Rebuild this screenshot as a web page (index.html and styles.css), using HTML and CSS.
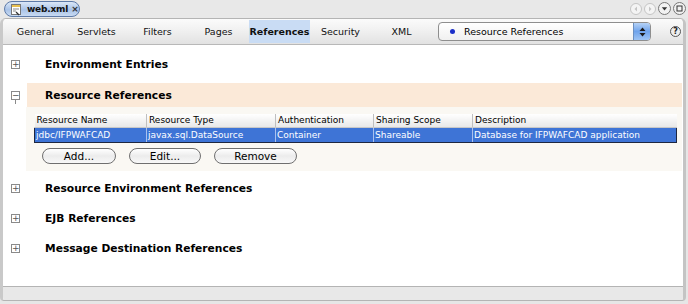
FILE: index.html
```html
<!DOCTYPE html>
<html>
<head>
<meta charset="utf-8">
<link rel="stylesheet" href="styles.css">
</head>
<body>
<div class="window">
  <div class="topbar">
    <div class="doc-tab">
      <svg class="doc-icon" width="12" height="13" viewBox="0 0 12 13">
        <rect x="1.5" y="1.5" width="9" height="10" fill="#fff" stroke="#777"/>
        <rect x="2" y="2" width="8" height="2" fill="#e8c050"/>
        <path d="M3 6h6M3 8h3" stroke="#888"/>
        <path d="M6 9l3 3" stroke="#333" stroke-width="1.2"/>
      </svg>
      <span class="doc-name">web.xml</span>
      <span class="doc-close">×</span>
    </div>
    <div class="win-ctrls">
      <span class="wc"><svg width="12" height="12" viewBox="0 0 12 12"><circle cx="6" cy="6" r="5.5" fill="#f4f4f4" stroke="#c4c4c4"/><path d="M7 3.5L4.5 6 7 8.5z" fill="#c4c4c4"/></svg></span>
      <span class="wc"><svg width="12" height="12" viewBox="0 0 12 12"><circle cx="6" cy="6" r="5.5" fill="#f4f4f4" stroke="#c4c4c4"/><path d="M5 3.5L7.5 6 5 8.5z" fill="#c4c4c4"/></svg></span>
      <span class="wc"><svg width="13" height="13" viewBox="0 0 13 13"><circle cx="6.5" cy="6.5" r="6" fill="#f2f2f2" stroke="#777"/><path d="M3.8 5.2h5.4L6.5 8.4z" fill="#333"/></svg></span>
      <span class="wc"><svg width="13" height="13" viewBox="0 0 13 13"><circle cx="6.5" cy="6.5" r="6" fill="#f2f2f2" stroke="#777"/><rect x="4" y="4" width="5" height="5" fill="none" stroke="#333"/></svg></span>
    </div>
  </div>

  <div class="panel">
    <div class="toolbar">
      <nav class="tabs">
        <span class="tab">General</span>
        <span class="tab">Servlets</span>
        <span class="tab">Filters</span>
        <span class="tab">Pages</span>
        <span class="tab active">References</span>
        <span class="tab">Security</span>
        <span class="tab">XML</span>
      </nav>
      <div class="combo">
        <span class="combo-dot"></span>
        <span class="combo-text">Resource References</span>
        <span class="combo-btn">
          <svg width="7" height="10" viewBox="0 0 7 10"><path d="M3.5 0.5L6.5 4H0.5z M0.5 6h6L3.5 9.5z" fill="#1a1a1a"/></svg>
        </span>
      </div>
      <span class="help">?</span>
    </div>

    <div class="content">
      <div class="section first">
        <span class="toggle">+</span>
        <span class="sec-title">Environment Entries</span>
      </div>

      <div class="section open">
        <span class="toggle minus">−</span>
        <span class="sec-title">Resource References</span>
      </div>
      <div class="sec-body">
        <table class="grid">
          <thead>
            <tr>
              <th class="c1">Resource Name</th>
              <th class="c2">Resource Type</th>
              <th class="c3">Authentication</th>
              <th class="c4">Sharing Scope</th>
              <th class="c5">Description</th>
            </tr>
          </thead>
          <tbody>
            <tr class="sel">
              <td>jdbc/IFPWAFCAD</td>
              <td>javax.sql.DataSource</td>
              <td>Container</td>
              <td>Shareable</td>
              <td>Database for IFPWAFCAD application</td>
            </tr>
          </tbody>
        </table>
        <div class="buttons">
          <button class="btn b-add">Add...</button>
          <button class="btn b-edit">Edit...</button>
          <button class="btn b-remove">Remove</button>
        </div>
      </div>

      <div class="section">
        <span class="toggle">+</span>
        <span class="sec-title">Resource Environment References</span>
      </div>
      <div class="section">
        <span class="toggle">+</span>
        <span class="sec-title">EJB References</span>
      </div>
      <div class="section">
        <span class="toggle">+</span>
        <span class="sec-title">Message Destination References</span>
      </div>
    </div>
    <div class="statusbar"></div>
  </div>
</div>
</body>
</html>
```
FILE: styles.css
```css
* { box-sizing: border-box; }
html, body { margin: 0; padding: 0; }
body {
  width: 688px;
  height: 304px;
  background: #e6e6e6;
  font-family: "DejaVu Sans", "Liberation Sans", sans-serif;
  color: #000;
  overflow: hidden;
}
.window { width: 688px; height: 304px; display: flex; flex-direction: column; }

.topbar {
  height: 18px;
  display: flex;
  align-items: flex-start;
  justify-content: space-between;
  padding: 1px 2px 0 4px;
  background: #e8e8e8;
}
.doc-tab {
  height: 16px;
  width: 76px;
  display: flex;
  align-items: center;
  padding: 0 3px 0 5px;
  border: 1px solid #5d7aa8;
  border-radius: 8px;
  background: linear-gradient(#dbe7f7, #a9c3e8 55%, #c8daf2);
}
.doc-icon { flex: none; }
.doc-name { font-weight: bold; font-size: 9px; margin-left: 5px; letter-spacing: -0.2px; color: #111; }
.doc-close { font-size: 9px; font-weight: bold; margin-left: 3px; color: #333; }

.win-ctrls { display: flex; gap: 2px; align-items: center; padding-top: 1px; }
.wc { display: flex; }

.panel {
  flex: 1;
  display: flex;
  flex-direction: column;
  margin: 0 2px 3px 0;
  border: 1px solid #b4b4b4;
  border-left: 3px solid #c9c9c9;
  border-right: 3px solid #c4c4c4;
  border-radius: 6px 6px 4px 4px;
  background: #fff;
  overflow: hidden;
}
.toolbar {
  height: 26px;
  display: flex;
  align-items: center;
  background: linear-gradient(#fbfbfb 0%, #f2f2f2 40%, #e2e2e2 100%);
  border-bottom: 1px solid #b8b8b8;
}
.tabs { display: flex; align-items: center; height: 100%; font-size: 9.5px; padding-left: 2px; }
.tab {
  width: 61px;
  height: 23px;
  display: flex;
  align-items: center;
  justify-content: center;
  color: #111;
  white-space: nowrap;
}
.tab.active {
  background: #c9dcf4;
  font-weight: bold;
}

.combo {
  margin-left: 6px;
  width: 213px;
  height: 19px;
  display: flex;
  align-items: center;
  border: 1px solid #8e8e8e;
  border-radius: 4px;
  background: linear-gradient(#ffffff, #f0f0f0);
  font-size: 9.5px;
  overflow: hidden;
}
.combo-dot {
  width: 5px; height: 5px; border-radius: 50%;
  background: #1b2fc9;
  margin-left: 11px;
}
.combo-text { margin-left: 9px; flex: 1; }
.combo-btn {
  width: 17px; height: 17px;
  display: flex; align-items: center; justify-content: center;
  background: linear-gradient(#b5d2f6, #6fa3eb 50%, #9ec4f4);
  border-left: 1px solid #6b8fc0;
}
.help {
  margin-left: 19px;
  width: 11px; height: 11px;
  border: 1px solid #555;
  border-radius: 50%;
  font-size: 8px;
  font-weight: bold;
  display: flex; align-items: center; justify-content: center;
  background: #eee;
  color: #222;
}

.content { flex: 1; padding: 7px 1px 0 0; }
.section {
  height: 24px;
  display: flex;
  align-items: center;
  margin-bottom: 6px;
}
.section.first { margin-bottom: 7px; }
.section.open { margin-bottom: 0; }
.toggle {
  width: 9px; height: 9px;
  border: 1px solid #8a8a8a;
  margin-left: 8px;
  font-size: 9px;
  line-height: 7px;
  text-align: center;
  color: #555;
  flex: none;
}
.toggle.minus { position: relative; }
.toggle.minus::after {
  content: "";
  position: absolute;
  left: 3px; top: 8px;
  width: 1px; height: 4px;
  background: #8a8a8a;
}
.sec-title {
  font-weight: bold;
  font-size: 10.7px;
  margin-left: 25px;
  height: 24px;
  display: flex;
  align-items: center;
  flex: 1;
}
.section.open .sec-title {
  margin-left: 7px;
  padding-left: 18px;
  background: #fbe9d8;
}
.sec-body {
  margin-left: 23px;
  background: #faf8f3;
  padding: 7px 5px 7px 8px;
  margin-bottom: 6px;
}
.grid {
  width: 643px;
  border-collapse: collapse;
  font-size: 9px;
  table-layout: fixed;
}
.grid th {
  font-weight: normal;
  text-align: left;
  height: 13px;
  padding: 0 2px;
  background: linear-gradient(#ffffff, #e8e8e8);
  border-left: 1px solid #bfbfbf;
  border-bottom: 1px solid #c8c8c8;
  white-space: nowrap;
}
.grid th:first-child { border-left: none; }
.grid .c1 { width: 112px; }
.grid .c2 { width: 129px; }
.grid .c3 { width: 98px; }
.grid .c4 { width: 99px; }
.grid tr.sel td {
  background: #3e74d6;
  color: #fff;
  height: 15px;
  padding: 0 1px;
  border-left: 1px solid #a9c1ee;
  border-top: 1px solid #1e2740;
  border-bottom: 1px solid #1e2740;
  white-space: nowrap;
}
.grid tr.sel td:first-child { border-left: 1px solid #1e2740; }
.grid tr.sel td:last-child { border-right: 1px solid #1e2740; }

.buttons { display: flex; gap: 13px; margin-top: 5px; padding-left: 8px; }
.btn {
  height: 16px;
  border: 1px solid #6f6f6f;
  border-radius: 8px;
  background: linear-gradient(#ffffff, #ececec 50%, #f8f8f8);
  font-family: inherit;
  font-size: 10.5px;
  padding: 0;
  color: #000;
}
.b-add { width: 74px; }
.b-edit { width: 72px; }
.b-remove { width: 83px; }

.statusbar {
  height: 14px;
  background: #e8e8e8;
  border-top: 1px solid #b4b4b4;
}
```
